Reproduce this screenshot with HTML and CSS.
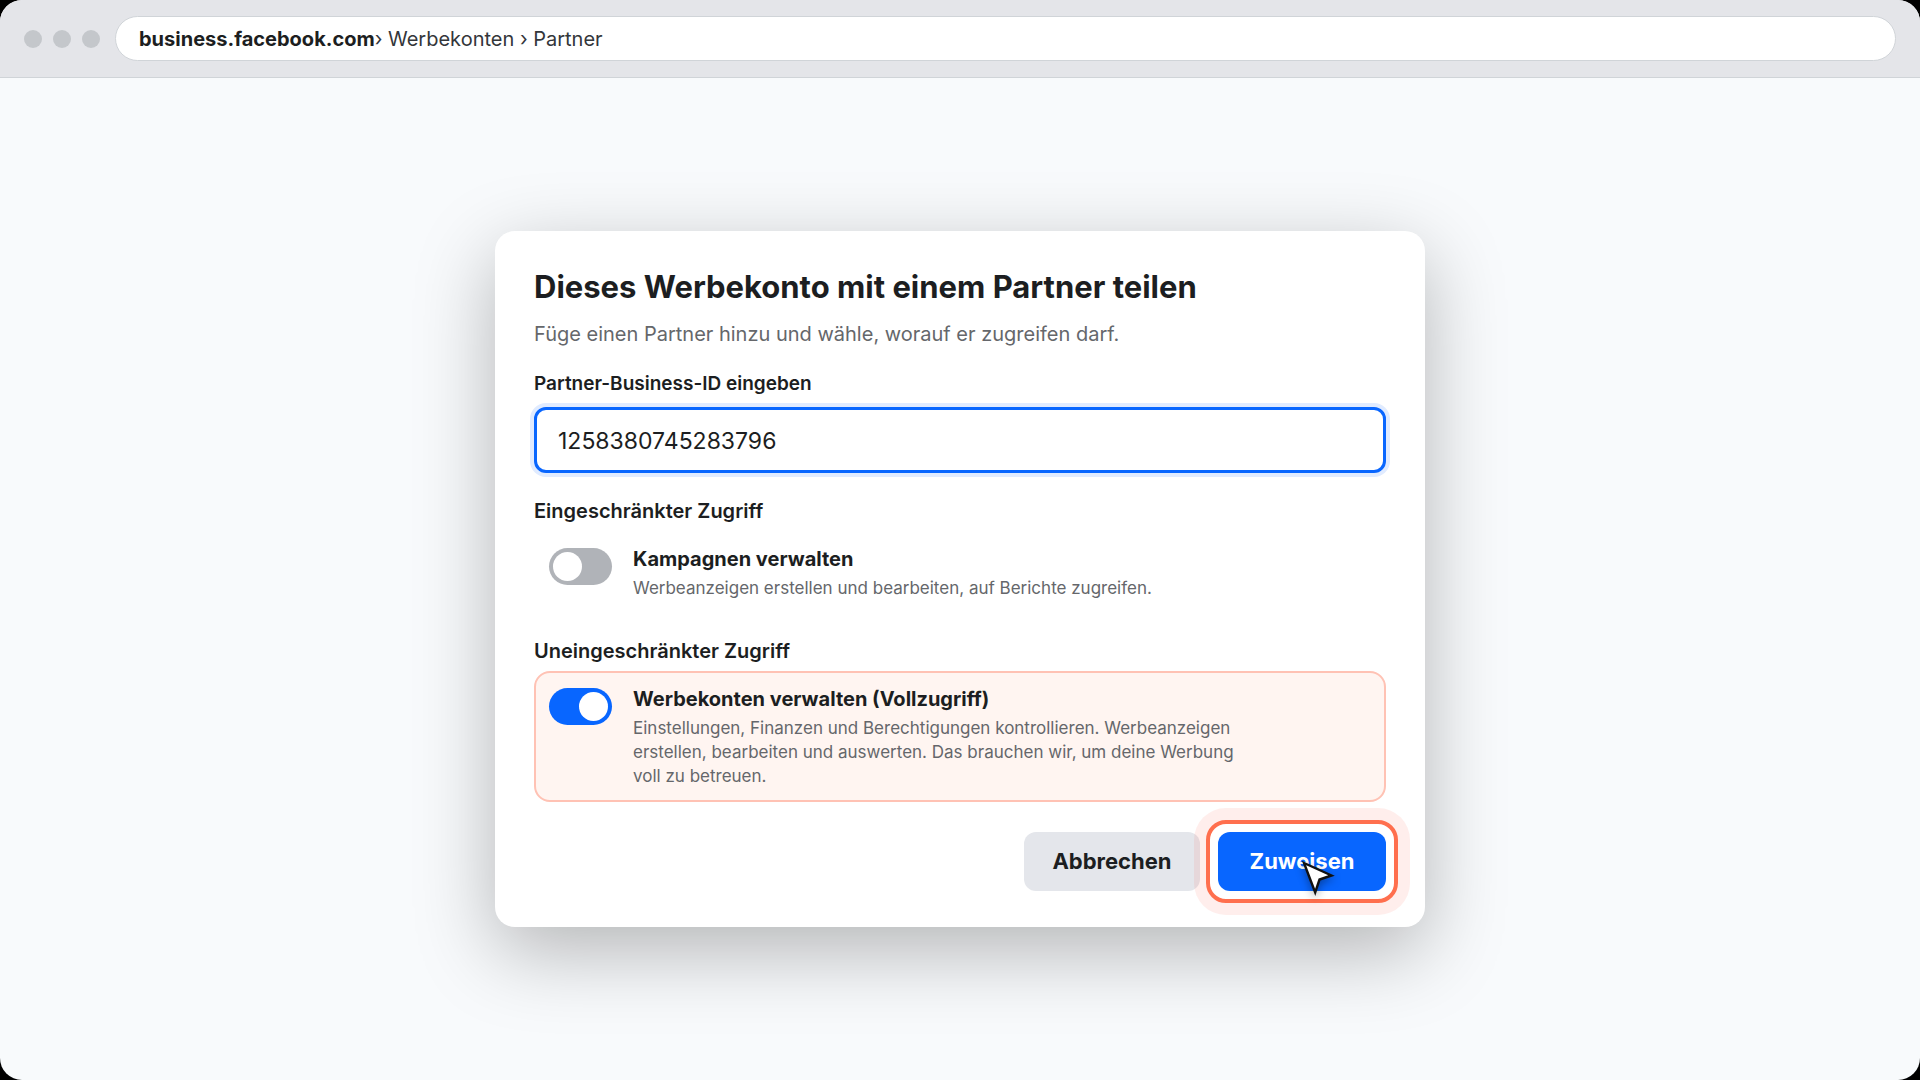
FILE: index.html
```html
<!DOCTYPE html>
<html lang="de">
<head>
    <meta charset="UTF-8">
    <meta name="viewport" content="width=device-width, initial-scale=1.0">
    <title>Werbekonto mit Partner teilen</title>
    <link rel="stylesheet" href="styles.css">
</head>
<body>
    <div class="window">
        <header class="browser-bar">
            <div class="dots">
                <span></span>
                <span></span>
                <span></span>
            </div>
            <div class="address"><strong>business.facebook.com</strong>› Werbekonten › Partner</div>
        </header>

        <main class="page">
            <form class="dialog">
                <h1>Dieses Werbekonto mit einem Partner teilen</h1>
                <p class="intro">Füge einen Partner hinzu und wähle, worauf er zugreifen darf.</p>

                <label class="field-label" for="partner-id">Partner-Business-ID eingeben</label>
                <input class="partner-id" id="partner-id" type="text" name="partner-id" value="1258380745283796">

                <h2>Eingeschränkter Zugriff</h2>
                <div class="option">
                    <input class="toggle" id="campaigns" type="checkbox" name="campaigns">
                    <div class="option-text">
                        <label for="campaigns">Kampagnen verwalten</label>
                        <p>Werbeanzeigen erstellen und bearbeiten, auf Berichte zugreifen.</p>
                    </div>
                </div>

                <h2>Uneingeschränkter Zugriff</h2>
                <div class="option highlighted">
                    <input class="toggle" id="accounts" type="checkbox" name="accounts" checked>
                    <div class="option-text">
                        <label for="accounts">Werbekonten verwalten (Vollzugriff)</label>
                        <p>Einstellungen, Finanzen und Berechtigungen kontrollieren. Werbeanzeigen erstellen, bearbeiten und auswerten. Das brauchen wir, um deine Werbung voll zu betreuen.</p>
                    </div>
                </div>

                <div class="actions">
                    <button class="cancel" type="button">Abbrechen</button>
                    <button class="assign" type="button">
                        Zuweisen
                        <svg class="cursor" width="36" height="40" viewBox="0 0 36 40" aria-hidden="true">
                            <path d="M4 4 L31.5 16.5 L19.5 20.5 L15.2 33.5 Z" fill="#fff" stroke="#111" stroke-width="2.4"/>
                        </svg>
                    </button>
                </div>
            </form>
        </main>
    </div>
</body>
</html>
```
FILE: styles.css
```css
/* Global Styles */
* {
    box-sizing: border-box;
}

body {
    font-family: Inter, "Liberation Sans", sans-serif;
    color: #1c1e21;
    background-color: #000;
    margin: 0;
}

h1, h2, p {
    margin: 0;
}

.window {
    display: flex;
    flex-direction: column;
    min-height: 100vh;
    background-color: #f8fafc;
    border-radius: 22px;
    overflow: hidden;
}

/* Browser bar */
.browser-bar {
    display: flex;
    align-items: center;
    gap: 15px;
    padding: 16px 24px;
    background-color: #e4e5e9;
    border-bottom: 1px solid #d0d4d8;
}

.dots {
    display: flex;
    gap: 11px;
}

.dots span {
    width: 18px;
    height: 18px;
    border-radius: 50%;
    background-color: #c4c7cb;
}

.address {
    flex: 1;
    padding: 2px 23px 0;
    font-size: 20px;
    line-height: 41px;
    color: #33363a;
    background-color: #fff;
    border: 1px solid #d0d4d8;
    border-radius: 23px;
}

.address strong {
    color: #1c1e21;
}

/* Dialog */
.page {
    flex: 1;
    display: flex;
    align-items: center;
    justify-content: center;
}

.dialog {
    width: 930px;
    padding: 36px 39px;
    background-color: #fff;
    border-radius: 20px;
    box-shadow: 0 24px 80px rgba(0, 0, 0, 0.28);
}

.dialog h1 {
    font-size: 31px;
    line-height: 40px;
    font-weight: 700;
}

.intro {
    margin-top: 13px;
    font-size: 20px;
    line-height: 28px;
    color: #65676b;
}

.field-label {
    display: block;
    margin: 24px 0 11px;
    font-size: 19px;
    line-height: 24px;
    font-weight: 600;
}

.partner-id {
    display: block;
    width: 100%;
    height: 66px;
    margin-bottom: 24px;
    padding: 2px 21px 0;
    font-family: inherit;
    font-size: 23px;
    color: #1c1e21;
    background-color: #fff;
    border: 3px solid #0866ff;
    border-radius: 12px;
    box-shadow: 0 0 0 4px #e0ebff;
    outline: none;
}

.dialog h2 {
    margin-bottom: 6px;
    font-size: 20px;
    line-height: 28px;
    font-weight: 600;
}

.option {
    display: flex;
    align-items: flex-start;
    gap: 21px;
    margin-bottom: 23px;
    padding: 12px 13px;
    border: 2px solid transparent;
    border-radius: 16px;
}

.option.highlighted {
    background-color: #fff5f1;
    border-color: #ffc2b4;
}

.option-text {
    max-width: 620px;
}

.option-text label {
    display: block;
    font-size: 20px;
    line-height: 28px;
    font-weight: 700;
}

.option-text p {
    margin-top: 3px;
    font-size: 17px;
    line-height: 24px;
    color: #65676b;
}

.toggle {
    appearance: none;
    flex: none;
    display: flex;
    width: 63px;
    height: 37px;
    margin: 3px 0 0;
    padding: 4px;
    background-color: #b0b3b8;
    border-radius: 19px;
}

.toggle::before {
    content: "";
    width: 29px;
    height: 29px;
    background-color: #fff;
    border-radius: 50%;
}

.toggle:checked {
    justify-content: flex-end;
    background-color: #0866ff;
}

/* Buttons */
.actions {
    display: flex;
    justify-content: flex-end;
    gap: 18px;
    margin-top: 30px;
}

.actions button {
    height: 59px;
    padding: 0 0 2px;
    font-family: inherit;
    font-size: 22px;
    font-weight: 700;
    border: none;
    border-radius: 12px;
    cursor: pointer;
}

.cancel {
    width: 176px;
    color: #1c1e21;
    background-color: #e4e6eb;
}

.assign {
    position: relative;
    width: 168px;
    color: #fff;
    background-color: #0866ff;
}

/* Click highlight around the button */
.assign::after {
    content: "";
    position: absolute;
    inset: -12px;
    border: 4px solid #ff6f4e;
    border-radius: 20px;
    box-shadow: 0 0 0 12px rgba(255, 90, 70, 0.1);
}

.cursor {
    position: absolute;
    z-index: 1;
    left: 82px;
    top: 27px;
    overflow: visible;
    filter: drop-shadow(0 3px 4px rgba(0, 0, 0, 0.35));
}
```
